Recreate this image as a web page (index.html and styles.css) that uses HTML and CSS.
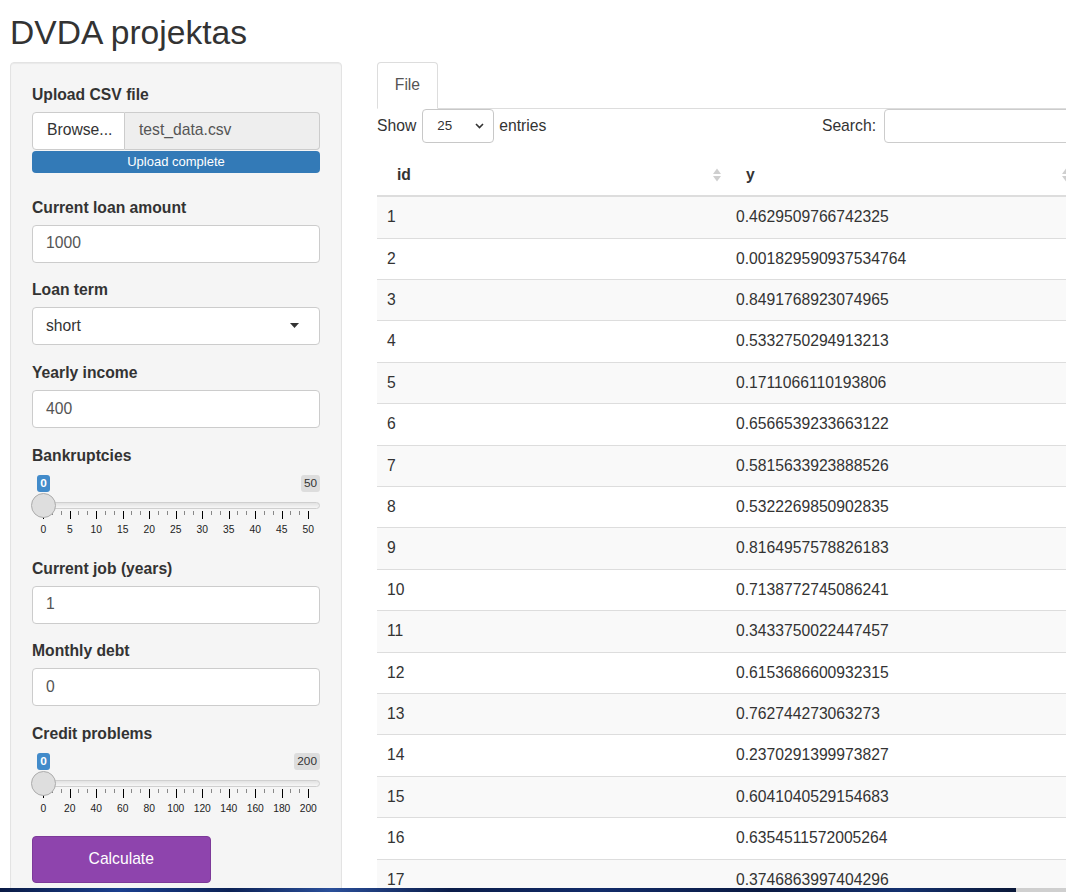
FILE: index.html
```html
<!DOCTYPE html>
<html lang="lt">
<head>
<meta charset="utf-8">
<title>DVDA projektas</title>
<link rel="stylesheet" href="styles.css">
</head>
<body>
<div class="page">
  <h2 class="title">DVDA projektas</h2>
  <div class="layout">
    <aside class="well">
      <div class="form-group file-group">
        <label class="control-label">Upload CSV file</label>
        <div class="file-row">
          <span class="browse">Browse...</span>
          <span class="fname">test_data.csv</span>
        </div>
        <div class="progress">Upload complete</div>
      </div>

      <div class="form-group">
        <label class="control-label">Current loan amount</label>
        <div class="input">1000</div>
      </div>

      <div class="form-group">
        <label class="control-label">Loan term</label>
        <div class="input select">
          <span>short</span>
          <svg class="caret" width="9" height="5" viewBox="0 0 9 5"><polygon points="0,0 9,0 4.5,5" fill="#333"/></svg>
        </div>
      </div>

      <div class="form-group">
        <label class="control-label">Yearly income</label>
        <div class="input">400</div>
      </div>

      <div class="form-group">
        <label class="control-label">Bankruptcies</label>
        <div class="slider">
          <div class="irs-top"><span class="irs-single">0</span><span class="irs-max">50</span></div>
          <div class="irs-line"></div>
          <span class="irs-handle"></span>
          <div class="irs-ticks">
            <span class="seg"><i></i><i></i></span><span class="seg"><i></i><i></i></span><span class="seg"><i></i><i></i></span><span class="seg"><i></i><i></i></span><span class="seg"><i></i><i></i></span><span class="seg"><i></i><i></i></span><span class="seg"><i></i><i></i></span><span class="seg"><i></i><i></i></span><span class="seg"><i></i><i></i></span><span class="seg last"><i></i><i></i></span>
          </div>
          <div class="irs-nums"><span>0</span><span>5</span><span>10</span><span>15</span><span>20</span><span>25</span><span>30</span><span>35</span><span>40</span><span>45</span><span>50</span></div>
        </div>
      </div>

      <div class="form-group">
        <label class="control-label">Current job (years)</label>
        <div class="input">1</div>
      </div>

      <div class="form-group">
        <label class="control-label">Monthly debt</label>
        <div class="input">0</div>
      </div>

      <div class="form-group">
        <label class="control-label">Credit problems</label>
        <div class="slider">
          <div class="irs-top"><span class="irs-single">0</span><span class="irs-max">200</span></div>
          <div class="irs-line"></div>
          <span class="irs-handle"></span>
          <div class="irs-ticks">
            <span class="seg"><i></i><i></i></span><span class="seg"><i></i><i></i></span><span class="seg"><i></i><i></i></span><span class="seg"><i></i><i></i></span><span class="seg"><i></i><i></i></span><span class="seg"><i></i><i></i></span><span class="seg"><i></i><i></i></span><span class="seg"><i></i><i></i></span><span class="seg"><i></i><i></i></span><span class="seg last"><i></i><i></i></span>
          </div>
          <div class="irs-nums"><span>0</span><span>20</span><span>40</span><span>60</span><span>80</span><span>100</span><span>120</span><span>140</span><span>160</span><span>180</span><span>200</span></div>
        </div>
      </div>

      <button class="btn-calc" type="button">Calculate</button>
    </aside>

    <main class="main">
      <ul class="nav-tabs">
        <li class="tab active">File</li>
      </ul>
      <div class="tab-content">
        <div class="dt-controls">
          <div class="dt-length">
            <span>Show</span>
            <span class="len-select"><span>25</span>
              <svg width="9" height="6" viewBox="0 0 9 6"><polyline points="1,1 4.5,4.5 8,1" fill="none" stroke="#333" stroke-width="1.6"/></svg>
            </span>
            <span>entries</span>
          </div>
          <div class="dt-filter">
            <span>Search:</span>
            <span class="search-input"></span>
          </div>
        </div>
        <table class="dt">
          <thead>
            <tr>
              <th>id<svg class="sort" width="10" height="16" viewBox="0 0 10 16"><polygon points="1,7 5,1.5 9,7" fill="#cfcfcf"/><polygon points="1,9 5,14.5 9,9" fill="#cfcfcf"/></svg></th>
              <th>y<svg class="sort" width="10" height="16" viewBox="0 0 10 16"><polygon points="1,7 5,1.5 9,7" fill="#cfcfcf"/><polygon points="1,9 5,14.5 9,9" fill="#cfcfcf"/></svg></th>
            </tr>
          </thead>
          <tbody>
            <tr><td>1</td><td>0.4629509766742325</td></tr>
            <tr><td>2</td><td>0.001829590937534764</td></tr>
            <tr><td>3</td><td>0.8491768923074965</td></tr>
            <tr><td>4</td><td>0.5332750294913213</td></tr>
            <tr><td>5</td><td>0.1711066110193806</td></tr>
            <tr><td>6</td><td>0.6566539233663122</td></tr>
            <tr><td>7</td><td>0.5815633923888526</td></tr>
            <tr><td>8</td><td>0.5322269850902835</td></tr>
            <tr><td>9</td><td>0.8164957578826183</td></tr>
            <tr><td>10</td><td>0.7138772745086241</td></tr>
            <tr><td>11</td><td>0.3433750022447457</td></tr>
            <tr><td>12</td><td>0.6153686600932315</td></tr>
            <tr><td>13</td><td>0.762744273063273</td></tr>
            <tr><td>14</td><td>0.2370291399973827</td></tr>
            <tr><td>15</td><td>0.6041040529154683</td></tr>
            <tr><td>16</td><td>0.6354511572005264</td></tr>
            <tr><td>17</td><td>0.3746863997404296</td></tr>
          </tbody>
        </table>
      </div>
    </main>
  </div>
</div>
<div class="taskbar"></div>
</body>
</html>
```

FILE: styles.css
```css
html, body {
  margin: 0;
  padding: 0;
  overflow: hidden;
  background: #fff;
}
body {
  font-family: "Liberation Sans", Arial, sans-serif;
  font-size: 15.7px;
  line-height: 22.4px;
  color: #333;
}
.page {
  width: 1100px;
  padding-left: 10px;
}
.title {
  margin: 0 0 10.5px 0;
  padding-top: 13.5px;
  font-size: 33.6px;
  line-height: 38px;
  font-weight: normal;
  color: #333;
}
.layout {
  display: flex;
  align-items: flex-start;
  gap: 35px;
}

/* sidebar */
.well {
  width: 332px;
  box-sizing: border-box;
  flex: none;
  background: #f5f5f5;
  border: 1px solid #e3e3e3;
  border-radius: 4px;
  box-shadow: inset 0 1px 1px rgba(0, 0, 0, 0.05);
  padding: 20.5px 21px 21px;
}
.form-group {
  margin-bottom: 16.8px;
}
.control-label {
  display: block;
  font-weight: bold;
  line-height: 22.4px;
  margin-bottom: 5.6px;
}
.file-group {
  margin-bottom: 24px;
}
.file-row {
  display: flex;
  height: 38px;
}
.browse {
  width: 93px;
  box-sizing: border-box;
  display: flex;
  align-items: center;
  padding-left: 14px;
  background: #fff;
  border: 1px solid #ccc;
  border-radius: 4px 0 0 4px;
  color: #333;
}
.fname {
  flex: 1;
  display: flex;
  align-items: center;
  padding-left: 14px;
  background: #eee;
  border: 1px solid #ccc;
  border-left: none;
  border-radius: 0 4px 4px 0;
  color: #555;
}
.progress {
  margin-top: 1.5px;
  height: 21.5px;
  line-height: 21.5px;
  background: #337ab7;
  border-radius: 4px;
  color: #fff;
  font-size: 13px;
  text-align: center;
}
.input {
  height: 38px;
  box-sizing: border-box;
  display: flex;
  align-items: center;
  padding: 0 13px;
  background: #fff;
  border: 1px solid #ccc;
  border-radius: 4px;
  color: #555;
}
.select {
  justify-content: space-between;
  padding-right: 20px;
  color: #333;
}
.caret {
  margin-top: -2px;
}

/* slider */
.slider {
  position: relative;
  height: 68px;
}
.irs-top {
  display: flex;
  justify-content: space-between;
  padding-top: 1.7px;
  height: 17px;
}
.irs-single,
.irs-max {
  height: 17px;
  line-height: 17px;
  font-size: 11.8px;
  padding: 0 3px;
  border-radius: 3px;
}
.irs-single {
  margin-left: 5.3px;
  background: #428bca;
  color: #fff;
  font-weight: bold;
}
.irs-max {
  background: #dddddd;
  color: #333;
}
.irs-line {
  margin-top: 10.3px;
  height: 7px;
  box-sizing: border-box;
  background: linear-gradient(#e2e2e2, #f6f6f6);
  border: 1px solid #cfcfcf;
  border-radius: 4px;
}
.irs-handle {
  position: absolute;
  top: 20px;
  left: -1.5px;
  width: 25px;
  height: 25px;
  box-sizing: border-box;
  border-radius: 50%;
  background: #dedede;
  border: 1px solid #ababab;
}
.irs-ticks {
  display: flex;
  width: 266px;
  margin-left: 11px;
  margin-top: 2px;
  height: 8.3px;
}
.seg {
  flex: 1;
  display: flex;
  justify-content: space-evenly;
  align-items: flex-start;
  border-left: 1px solid #000;
}
.seg.last {
  border-right: 1px solid #000;
}
.seg i {
  width: 1px;
  height: 4px;
  background: #888;
}
.irs-nums {
  display: flex;
  margin-left: -2px;
  margin-top: 5.2px;
  width: 291.5px;
  font-size: 10.3px;
  line-height: 12px;
  color: #222;
}
.irs-nums span {
  flex: 1;
  text-align: center;
}

.btn-calc {
  display: block;
  margin-top: 2px;
  width: 178.5px;
  height: 46.5px;
  background: #8e44ad;
  border: 1px solid #7d3a99;
  border-radius: 4px;
  color: #fff;
  font-family: "Liberation Sans", Arial, sans-serif;
  font-size: 15.7px;
  padding: 0;
  cursor: pointer;
}

/* main panel */
.main {
  width: 698px;
  flex: none;
}
.nav-tabs {
  list-style: none;
  margin: 0;
  padding: 0;
  display: flex;
  border-bottom: 1px solid #ddd;
}
.tab {
  padding: 11.2px 16.8px;
  line-height: 22.4px;
  border: 1px solid #ddd;
  border-bottom-color: transparent;
  border-radius: 4px 4px 0 0;
  background: #fff;
  color: #555;
  margin-bottom: -1px;
}
.dt-controls {
  display: flex;
  justify-content: space-between;
  align-items: center;
  height: 34px;
}
.dt-length,
.dt-filter {
  display: flex;
  align-items: center;
}
.len-select {
  width: 72px;
  height: 33.5px;
  box-sizing: border-box;
  margin: 0 5px 0 6px;
  border: 1px solid #c8c8c8;
  border-radius: 4px;
  background: #fff;
  display: flex;
  align-items: center;
  justify-content: space-between;
  padding: 0 9px 0 14px;
  font-size: 13.4px;
  color: #333;
}
.search-input {
  width: 191px;
  height: 34px;
  box-sizing: border-box;
  margin-left: 8px;
  border: 1px solid #ccc;
  border-radius: 4px;
  background: #fff;
}
.dt {
  width: 100%;
  table-layout: fixed;
  border-collapse: collapse;
  margin-top: 12px;
}
.dt th {
  position: relative;
  text-align: left;
  font-weight: bold;
  padding: 9px 10px 9px 20px;
  line-height: 22.4px;
  border-bottom: 2px solid #ddd;
}
.sort {
  position: absolute;
  right: 4px;
  top: 12px;
}
.dt td {
  padding: 9px 10px;
  line-height: 22.4px;
  border-top: 1px solid #ddd;
}
.dt tbody tr:nth-child(odd) td {
  background: #f9f9f9;
}

.taskbar {
  position: fixed;
  left: 0;
  right: 0;
  bottom: 0;
  height: 4px;
  background: linear-gradient(to right, #0a1b45 0, #1a3f8f 120px, #0c2256 230px, #2a4f9a 330px, #0b1d4a 450px, #122c6a 600px, #0a1a42 760px, #14316f 900px, #0a1838 1016px, #cfcfcf 1016px);
}
```
